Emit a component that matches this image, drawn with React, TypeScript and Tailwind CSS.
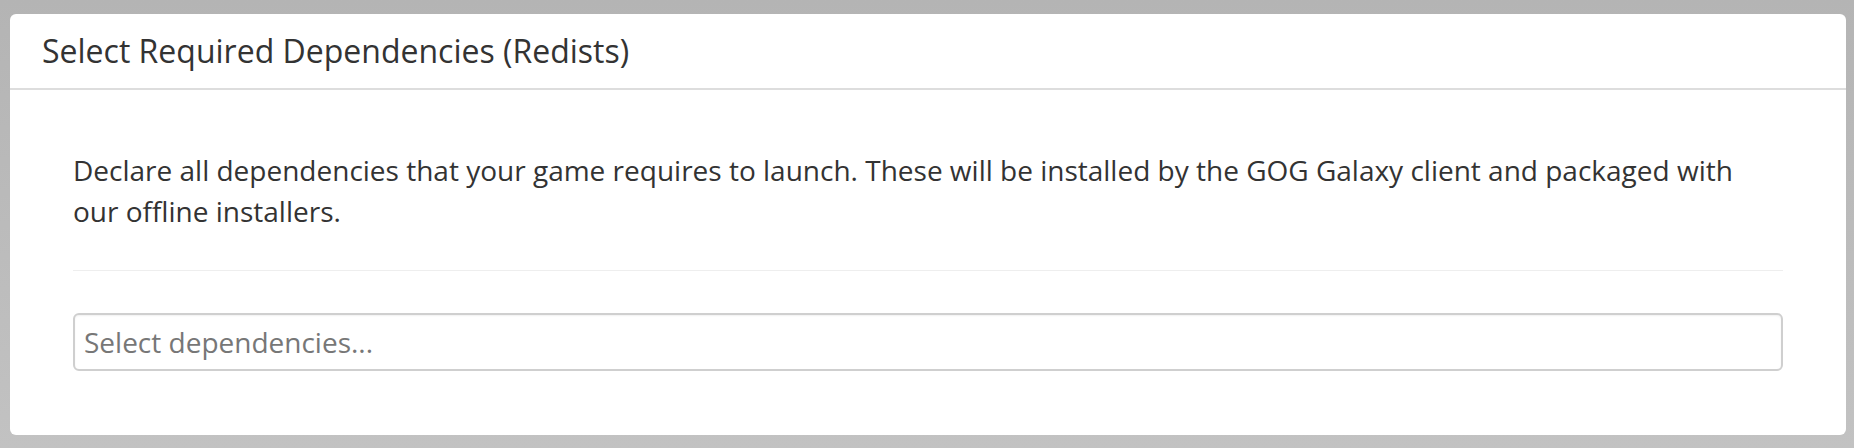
export default function App() {
  return (
    <div className="h-[448px] w-[1854px] bg-linear-to-b from-[#b4b4b4] to-[#c2c2c2] pt-[14px] pl-[10px] pr-[8px] font-['Open_Sans',sans-serif]">
      <div className="h-[421px] rounded-[6px] bg-white">
        <div className="flex h-[76px] items-center border-b-2 border-[#dddddd] pl-[32px]">
          <h2 className="text-[32px] leading-none text-[#333333]">Select Required Dependencies (Redists)</h2>
        </div>
        <div className="px-[63px] pt-[60px]">
          <p className="text-[28px] leading-[41px] text-[#333333]">
            Declare all dependencies that your game requires to launch. These will be installed by the GOG Galaxy client and packaged with our offline installers.
          </p>
          <div className="mt-[38px] h-px bg-[#eeeeee]" />
          <div className="mt-[42px] flex h-[58px] items-center rounded-[6px] border-2 border-[#cfcfcf] px-[9px] shadow-[inset_0_1px_2px_rgba(0,0,0,0.06)]">
            <span className="text-[28px] text-[#777777]">Select dependencies...</span>
          </div>
        </div>
      </div>
    </div>
  );
}
